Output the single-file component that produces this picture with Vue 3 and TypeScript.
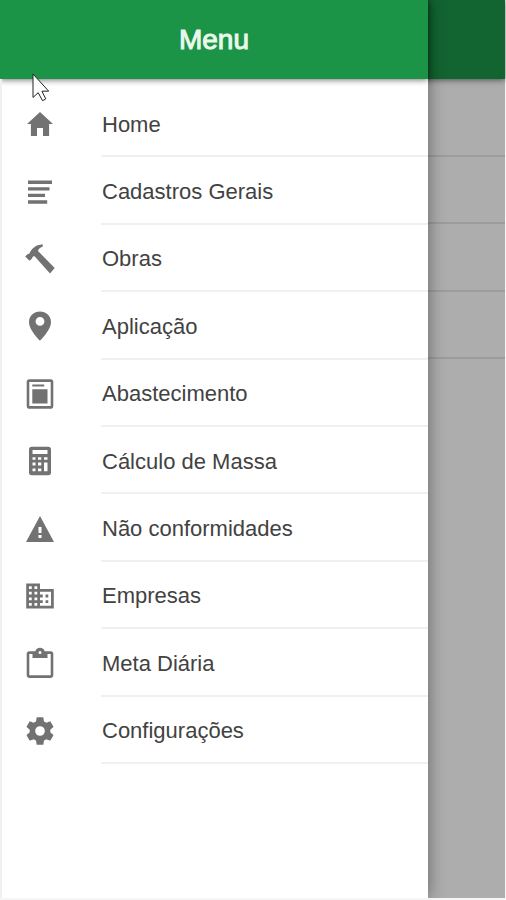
<script setup lang="ts">
interface MenuItem {
  label: string
  viewBox: string
  path: string
}

const ionic = '0 0 512 512'
const grid = '0 0 32 32'
const material = '0.4 0.4 23.2 23.2'

const items: MenuItem[] = [
  { label: 'Home', viewBox: ionic, path: 'M208 448V320h96v128h97.6V256H464L256 64 48 256h62.4v192z' },
  { label: 'Cadastros Gerais', viewBox: grid, path: 'M4 4.500h24v3.600H4zM4 11.200h21.500v3.400H4zM4 17.800h17v3.200H4zM4 24.200h19.200v3.500H4z' },
  { label: 'Obras', viewBox: grid, path: 'M1.200 13.500L4 10.700l1 .6C7 6.500 11 1.800 18.800 1.300l-.2 2.400C15.800 4.400 14.400 6 14 8L30.700 25 26 30.500 10.800 13.400c-1.400-.4-2.200.3-2.600 1.500L8 15.600l-2.500 2.200z' },
  { label: 'Aplicação', viewBox: grid, path: 'M16 1.500C9.900 1.500 5 6.100 5 12c0 8.300 11 18.700 11 18.700S27 20.300 27 12C27 6.100 22.100 1.500 16 1.500zm0 14.300a4.400 4.400 0 1 1 0-8.800 4.400 4.400 0 0 1 0 8.800z' },
  { label: 'Abastecimento', viewBox: grid, path: 'M5.500 1.300h21a2.800 2.800 0 0 1 2.800 2.800v23.800a2.800 2.800 0 0 1-2.800 2.800h-21a2.800 2.800 0 0 1-2.800-2.800V4.100a2.800 2.800 0 0 1 2.800-2.800zM5.300 3.900v24.200h21.400V3.900zM8.300 6.600h11.900v2H8.300zM8.300 11.300h15.200v14.300H8.300z' },
  { label: 'Cálculo de Massa', viewBox: grid, path: 'M7.800 1.700h16.400a2.800 2.800 0 0 1 2.800 2.800v23a2.800 2.800 0 0 1-2.800 2.800H7.800A2.800 2.800 0 0 1 5 27.500v-23a2.800 2.800 0 0 1 2.800-2.800zM8.500 5v4h15V5zM8.500 12.200v2.600h3v-2.600zM14 12.200v2.600h3.300v-2.600zM20 12.200v2.600h3.500v-2.600zM8.500 17.600v2.800h3v-2.800zM14 17.600v2.800h3.300v-2.800zM8.500 23.400v2.800h3v-2.800zM14 23.400v2.800h3.300v-2.800zM20 17.600v8.600h3.500v-8.600z' },
  { label: 'Não conformidades', viewBox: ionic, path: 'M32 464h448L256 48 32 464zm248-64h-48v-48h48v48zm0-80h-48v-96h48v96z' },
  { label: 'Empresas', viewBox: material, path: 'M12 7V3H2v18h20V7H12zM6 19H4v-2h2v2zm0-4H4v-2h2v2zm0-4H4V9h2v2zm0-4H4V5h2v2zm4 12H8v-2h2v2zm0-4H8v-2h2v2zm0-4H8V9h2v2zm0-4H8V5h2v2zm10 12h-8v-2h2v-2h-2v-2h2v-2h-2V9h8v10zm-2-8h-2v2h2v-2zm0 4h-2v2h2v-2z' },
  { label: 'Meta Diária', viewBox: grid, path: 'M5.500 4.300h5.800a4.900 4.900 0 0 1 9.400 0h5.800a2.800 2.800 0 0 1 2.800 2.800v21a2.800 2.800 0 0 1-2.800 2.800h-21a2.800 2.800 0 0 1-2.800-2.800v-21a2.800 2.800 0 0 1 2.800-2.800zM5.300 6.900v21.400h21.400V6.900h-3.200v4.200h-15V6.900zM16 3.900a1.500 1.500 0 1 0 0 3 1.500 1.500 0 0 0 0-3z' },
  { label: 'Configurações', viewBox: material, path: 'M19.430 12.980c.04-.32.07-.64.07-.98s-.03-.66-.07-.98l2.110-1.650c.19-.15.24-.42.12-.64l-2-3.460c-.12-.22-.39-.3-.61-.22l-2.490 1c-.52-.4-1.080-.73-1.690-.98l-.38-2.650A.488.488 0 0 0 14 2h-4c-.25 0-.46.18-.49.42l-.38 2.650c-.61.25-1.170.59-1.690.98l-2.490-1c-.23-.09-.49 0-.61.22l-2 3.460c-.13.22-.07.49.12.64l2.110 1.650c-.04.32-.07.65-.07.98s.03.66.07.98l-2.110 1.650c-.19.15-.24.42-.12.64l2 3.460c.12.22.39.3.61.22l2.490-1c.52.4 1.080.73 1.690.98l.38 2.650c.03.24.24.42.49.42h4c.25 0 .46-.18.49-.42l.38-2.650c.61-.25 1.170-.59 1.690-.98l2.490 1c.23.09.49 0 .61-.22l2-3.460c.12-.22.07-.49-.12-.64l-2.110-1.650zM12 15.500a3.500 3.500 0 1 1 0-7 3.500 3.500 0 0 1 0 7z' },
]

const pageRows = 4
</script>

<template>
  <div class="screen">
    <div class="page" aria-hidden="true">
      <div class="page-bar"></div>
      <div class="page-list">
        <div v-for="n in pageRows" :key="n" class="page-row"></div>
      </div>
    </div>
    <div class="backdrop"></div>

    <aside class="drawer">
      <header class="bar">
        <h1 class="title">Menu</h1>
      </header>
      <nav class="content">
        <ul class="list">
          <li v-for="item in items" :key="item.label" class="row">
            <a class="link" href="#">
              <svg class="icon" :viewBox="item.viewBox" aria-hidden="true">
                <path :d="item.path" fill-rule="evenodd" />
              </svg>
              <span class="label">{{ item.label }}</span>
            </a>
          </li>
        </ul>
      </nav>
    </aside>

    <svg class="pointer" viewBox="0 0 18 30" aria-hidden="true">
      <path d="M1 1v23.500l5.200-4.800 4.300 8 3.300-1.800-3.900-7.700h6.800z" />
    </svg>
  </div>
</template>

<style>
body {
  margin: 0;
  background: #f6f6f6;
}
</style>

<style scoped>
.screen {
  position: relative;
  box-sizing: border-box;
  min-height: 100vh;
  padding-bottom: 2px;
  display: grid;
  overflow: hidden;
  font-family: "Liberation Sans", Arial, sans-serif;
}

.page,
.backdrop,
.drawer {
  grid-area: 1 / 1;
}

.page,
.backdrop {
  margin-right: 1px;
}

.page {
  background: #fff;
}

.page-bar,
.bar {
  height: 79px;
  background: #1b9448;
  box-shadow: 0 1px 6px rgba(0, 0, 0, 0.55);
}

.page-list {
  display: grid;
  grid-auto-rows: 1fr;
  min-height: 270px;
  padding-top: 10px;
}

.page-row {
  border-bottom: 2px solid #e6e6e6;
}

.backdrop {
  z-index: 1;
  background: rgba(0, 0, 0, 0.32);
}

.drawer {
  z-index: 2;
  display: flex;
  flex-direction: column;
  margin-right: 78px;
  background: #fff;
  box-shadow: 0 0 16px rgba(0, 0, 0, 0.42);
  clip-path: inset(0 -24px 0 0);
}

.bar {
  display: flex;
  align-items: center;
  justify-content: center;
}

.title {
  margin: 0;
  color: #e9f8ec;
  font-size: 28px;
  font-weight: 400;
  line-height: 32px;
  -webkit-text-stroke: 1px #e9f8ec;
}

.content {
  flex: 1;
  padding-top: 11px;
  border-left: 2px solid #f0f0f0;
}

.list {
  display: grid;
  grid-auto-rows: 1fr;
  min-height: 674px;
  margin: 0;
  padding: 0;
  list-style: none;
}

.row {
  display: grid;
}

.link {
  display: flex;
  align-items: stretch;
  gap: 45px;
  padding-left: 22px;
  color: #424242;
  text-decoration: none;
}

.icon {
  flex: none;
  width: 32px;
  height: 32px;
  margin-top: 1px;
  align-self: center;
  fill: #727272;
}

.label {
  flex: 1;
  display: flex;
  align-items: center;
  padding: 4px 0 0 1px;
  border-bottom: 2px solid #f0f0f0;
  font-size: 22px;
  line-height: 26px;
}

.pointer {
  position: absolute;
  z-index: 3;
  top: 73px;
  left: 32px;
  width: 18px;
  height: 30px;
  fill: #fff;
  stroke: #222;
  stroke-width: 1;
}
</style>
